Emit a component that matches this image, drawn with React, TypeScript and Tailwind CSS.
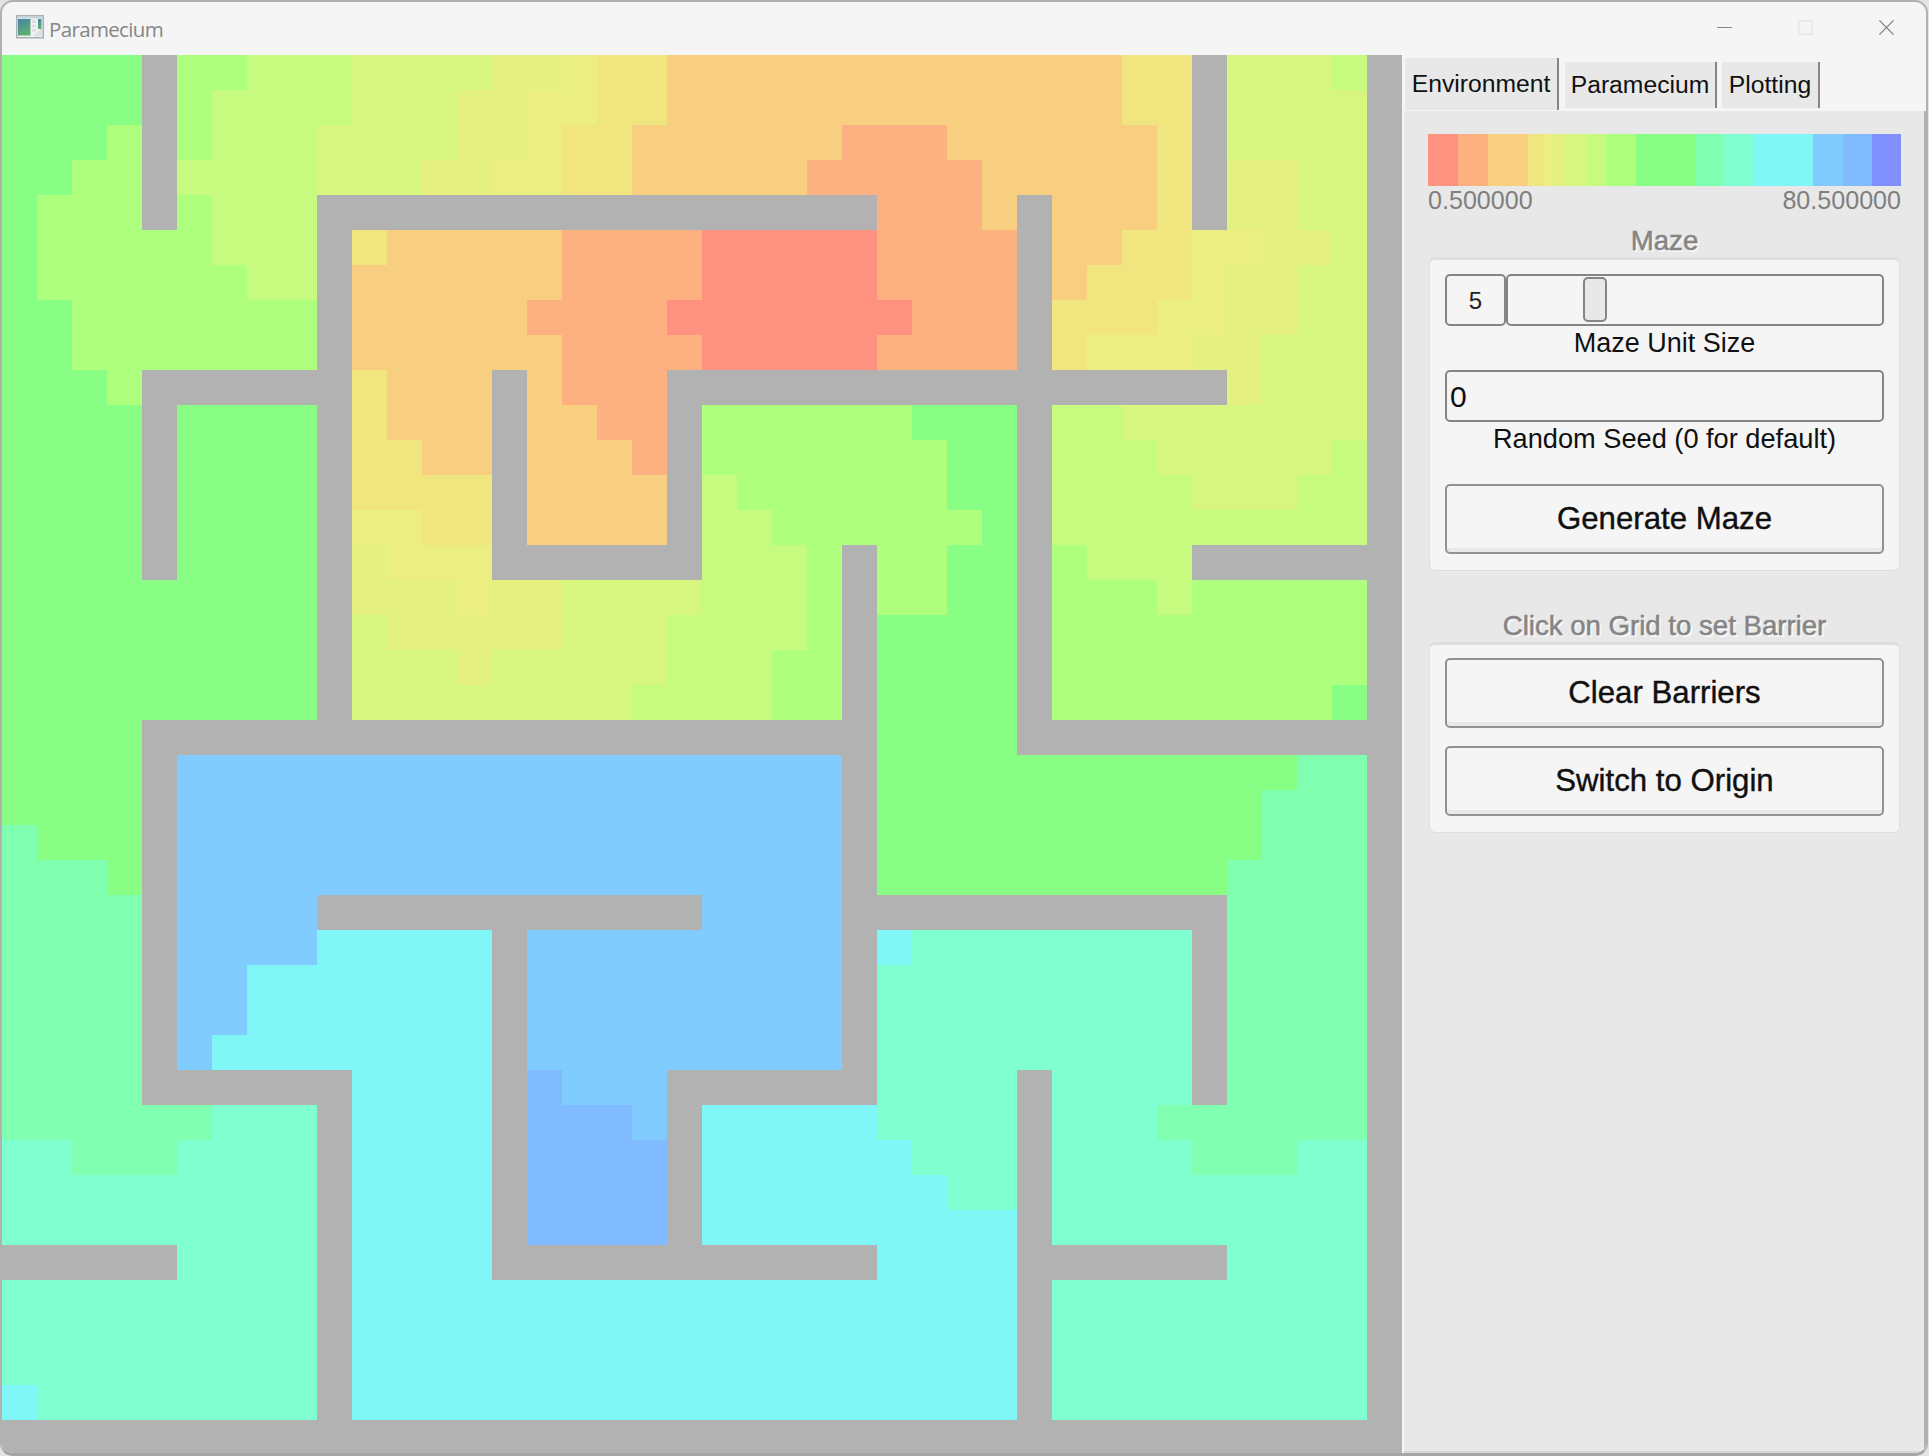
import type { ReactNode } from 'react';

const CELL = 35;

const PALETTE: Record<string, string> = {
  A: '#ff9180',
  B: '#fdb080',
  C: '#f8cf80',
  D: '#f0e57f',
  E: '#ebee80',
  F: '#e4f180',
  G: '#d6f67f',
  H: '#c7fb7f',
  I: '#afff7f',
  J: '#88ff84',
  K: '#80ffb0',
  L: '#80ffd0',
  M: '#80f6f6',
  N: '#80ccff',
  O: '#80baff',
  P: '#8090ff',
  W: '#b2b2b2',
};

// Run-length encoded rows: a palette letter followed by the number of cells.
const ROWS = [
  'J4W1I2H3G4F2E1D2C13D2W1G3H1W1',
  'J4W1I1H4G3F2E2D2C13D2W1G4W1',
  'J3I1W1I1H3G4F2E1D2C6B3C6D1W1G4W1',
  'J2I2W1H4G3F2E2D2C5B5C5D1W1F2G2W1',
  'J1I3W1I1H3W16B3C1W1C3D1W1F2G2W1',
  'J1I5H3W1D1C5B4A5B4W1C2D2E2F2G1W1',
  'J1I6H2W1C6B4A5B4W1C1D3E1F2G2W1',
  'J2I7W1C5B4A7B3W1D3E2F2G2W1',
  'J2I7W1C6B4A5B4W1D1E3F2G3W1',
  'J3I1W6D1C3W1C1B3W16F1G3W1',
  'J4W1J4W1D1C3W1C2B2W1I6J3W1H2G7W1',
  'J4W1J4W1D2C2W1C3B1W1I7J2W1H3G5H1W1',
  'J4W1J4W1D4W1C4W1H1I6J2W1H4G3H2W1',
  'J4W1J4W1E2D2W1C4W1H2I6J1W1H9W1',
  'J4W1J4W1F1E3W6H3I1W1I2J2W1I1H3W6',
  'J9W1F3E1F2G4H3I1W1I2J2W1I3H1I5W1',
  'J9W1G1F5G3H4I1W1J4W1I9W1',
  'J9W1G3F1G5H3I2W1J4W1I9W1',
  'J9W1G8H4I2W1J4W1I8J1W1',
  'J4W21J4W11',
  'J4W1N19W1J12K2W1',
  'J4W1N19W1J11K3W1',
  'K1J3W1N19W1J11K3W1',
  'K3J1W1N19W1J10K4W1',
  'K4W1N4W11N4W11K4W1',
  'K4W1N4M5W1N9W1M1L8W1K4W1',
  'K4W1N2M7W1N9W1L9W1K4W1',
  'K4W1N2M7W1N9W1L9W1K4W1',
  'K4W1N1M8W1N9W1L9W1K4W1',
  'K4W6M4W1O1N3W6L4W1L4W1K4W1',
  'K6L3W1M4W1O3N1W1M5L4W1L3K6W1',
  'L2K3L4W1M4W1O4W1M6L3W1L4K3L2W1',
  'L9W1M4W1O4W1M7L2W1L9W1',
  'L9W1M4W1O4W1M9W1L9W1',
  'W5L4W1M4W11M4W6L4W1',
  'L9W1M19W1L9W1',
  'L9W1M19W1L9W1',
  'L9W1M19W1L9W1',
  'M1L8W1M19W1L9W1',
  'W40',
];

const SCALE: [string, number][] = [
  ['A', 30], ['B', 30], ['C', 40], ['D', 16], ['E', 8], ['F', 14], ['G', 20], ['H', 20],
  ['I', 30], ['J', 59], ['K', 29], ['L', 30], ['M', 59], ['N', 30], ['O', 29], ['P', 29],
];

function parse(row: string) {
  return Array.from(row.matchAll(/([A-Z])(\d+)/g), (m) => ({ key: m[1], count: Number(m[2]) }));
}

function Maze() {
  return (
    <div className="w-[1400px] shrink-0">
      {ROWS.map((row, y) => (
        <div key={y} className="flex h-[35px]">
          {parse(row).map((run, i) => (
            <div key={i} style={{ width: run.count * CELL, backgroundColor: PALETTE[run.key] }} />
          ))}
        </div>
      ))}
    </div>
  );
}

function AppIcon() {
  return (
    <svg width="28" height="24" viewBox="0 0 28 24" className="shrink-0">
      <defs>
        <linearGradient id="screen" x1="0" y1="0" x2="0.4" y2="1">
          <stop offset="0" stopColor="#4a80a4" />
          <stop offset="1" stopColor="#5cb070" />
        </linearGradient>
      </defs>
      <rect x="0.75" y="0.75" width="26.5" height="22" fill="#f1f2f3" stroke="#a6b0b5" strokeWidth="1.5" />
      <rect x="1.5" y="1.5" width="25" height="2" fill="#c3d3dd" />
      <rect x="2" y="4" width="12.5" height="16.5" fill="url(#screen)" />
      <path d="M16 6.5h4M16 11h4M16 15.5h4" stroke="#dcdcde" strokeWidth="2.5" />
      <path d="M17 21l9-9v9z" fill="#dfe0e2" />
      <rect x="22" y="4" width="3.5" height="10" fill="url(#screen)" />
    </svg>
  );
}

function TitleBar() {
  return (
    <div className="flex h-[53px] shrink-0 items-start pl-[14px]">
      <div className="pt-[13px]"><AppIcon /></div>
      <div className="ml-[5px] pt-[12px] font-['Open_Sans',sans-serif] text-[20.5px] leading-[30px] tracking-[-0.65px] text-[#868686]">
        Paramecium
      </div>
      <div className="ml-auto flex gap-[66px] pt-[18px] pr-[32px]">
        <svg width="15" height="15" viewBox="0 0 15 15"><path d="M0 7.5H15" stroke="#868686" /></svg>
        <svg width="15" height="15" viewBox="0 0 15 15"><rect x="0.75" y="0.75" width="13.5" height="13.5" fill="none" stroke="#e6e6e6" strokeWidth="1.5" /></svg>
        <svg width="15" height="15" viewBox="0 0 15 15"><path d="M0.4 0.4L14.6 14.6M14.6 0.4L0.4 14.6" stroke="#7c7c7c" strokeWidth="1.2" /></svg>
      </div>
    </div>
  );
}

function Group({ title, className, children }: { title: string; className: string; children: ReactNode }) {
  return (
    <section className="mx-px">
      <h2 className="h-[35px] text-center text-[27.6px] leading-[38px] whitespace-nowrap text-[#858585] [-webkit-text-stroke:0.5px_#858585] [text-shadow:2px_2px_0_#f7f7f7]">
        {title}
      </h2>
      <div className={'rounded-[6px] border border-t-[3px] border-[#dedede] bg-[#f5f5f5] px-[15px] ' + className}>
        {children}
      </div>
    </section>
  );
}

function Button({ children }: { children: ReactNode }) {
  return (
    <button className="block h-[70px] w-full shrink-0 rounded-[5px] border-2 border-[#929292] bg-[#f5f5f5] text-[31.2px] leading-[64px] text-[#101010] shadow-[inset_0_-4px_0_#e8e8e8] [-webkit-text-stroke:0.4px_#101010]">
      {children}
    </button>
  );
}

export default function App() {
  return (
    <div className="h-[1456px] w-[1929px] overflow-hidden bg-[#e4e4e4] font-['Liberation_Sans',Arial,sans-serif]">
      <div className="flex h-[1456px] w-[1928px] flex-col overflow-hidden rounded-[13px] border-2 border-b-[3px] border-[#b1b1b1] border-b-[#a6a6a6] bg-[#f5f5f5]">
        <TitleBar />
        <div className="flex min-h-0 flex-1">
          <Maze />
          <div className="flex flex-1 flex-col pl-[2px]">
            <div className="flex h-[56px] shrink-0 pl-px text-[24.7px] text-[#101010]">
              <div className="mt-[3px] h-[52px] w-[154px] border-r-2 border-[#858585] bg-[#e8e8e8] text-center leading-[51px]">Environment</div>
              <div className="mt-[7px] ml-[6px] h-[46px] w-[152px] border-r-2 border-[#858585] bg-[#e8e8e8] text-center leading-[46px]">Paramecium</div>
              <div className="mt-[7px] ml-[5px] h-[46px] w-[98px] border-r-2 border-[#858585] bg-[#e8e8e8] text-center leading-[46px]">Plotting</div>
            </div>
            <div className="flex flex-1 flex-col border-r-2 border-b-2 border-r-[#b1b1b1] border-b-[#d8d8d8] bg-[#e8e8e8] pt-[23px] pr-[23px] pl-[24px]">
              <div className="flex h-[52px] shrink-0">
                {SCALE.map(([key, size]) => (
                  <div key={key} style={{ flexGrow: size, backgroundColor: PALETTE[key] }} />
                ))}
              </div>
              <div className="flex h-[36px] shrink-0 justify-between text-[25.1px] leading-[29px] text-[#7f7f7f]">
                <span>0.500000</span>
                <span>80.500000</span>
              </div>
              <Group title="Maze" className="h-[314px] pt-[14px]">
                <div className="flex h-[52px]">
                  <div className="w-[61px] rounded-[5px] border-2 border-[#858585] text-center text-[24px] leading-[49px] text-[#222]">5</div>
                  <div className="flex-1 rounded-[5px] border-2 border-[#858585] pt-px pl-[75px]">
                    <div className="h-[45px] w-[24px] rounded-[5px] border-2 border-[#858585] bg-[#e8e8e8]" />
                  </div>
                </div>
                <div className="h-[44px] text-center text-[27px] leading-[34px] text-[#101010]">Maze Unit Size</div>
                <div className="h-[52px] rounded-[5px] border-2 border-[#858585] pl-[3px] text-[30px] leading-[49px] text-[#101010]">0</div>
                <div className="h-[62px] text-center text-[27.2px] leading-[34px] whitespace-nowrap text-[#101010]">Random Seed (0 for default)</div>
                <Button>Generate Maze</Button>
              </Group>
              <div className="h-[36px] shrink-0" />
              <Group title="Click on Grid to set Barrier" className="flex h-[191px] flex-col gap-[18px] pt-[13px]">
                <Button>Clear Barriers</Button>
                <Button>Switch to Origin</Button>
              </Group>
            </div>
          </div>
        </div>
      </div>
    </div>
  );
}
